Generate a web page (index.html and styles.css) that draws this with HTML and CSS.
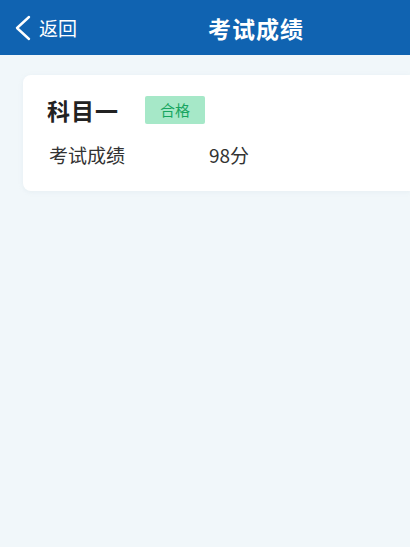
FILE: index.html
```html
<!DOCTYPE html>
<html lang="zh-CN">
<head>
    <meta charset="UTF-8">
    <title>考试成绩</title>
    <link rel="stylesheet" href="styles.css">
</head>
<body>
    <div id="header">
        <div class="back">
            <svg class="arrow" width="18" height="26" viewBox="0 0 18 26">
                <path d="M15 2 L3 13 L15 24" fill="none" stroke="#fff" stroke-width="2.4" stroke-linecap="round" stroke-linejoin="round"/>
            </svg>
            <span>返回</span>
        </div>
        <div class="title">考试成绩</div>
    </div>
    <div id="main">
        <div class="card">
            <div class="row-top">
                <span class="name">科目一</span>
                <span class="tag">合格</span>
            </div>
            <div class="row-score">
                <span class="label">考试成绩</span>
                <span class="value">98分</span>
            </div>
        </div>
    </div>
</body>
</html>
```

FILE: styles.css
```css
body, div, span{
    margin:0;
    padding:0;
}
body{
    font-family:"Noto Sans CJK SC", "Noto Sans", sans-serif;
    background:#f1f7fa;
    height:547px;
    overflow:hidden;
}
#header{
    display:flex;
    align-items:center;
    height:55px;
    background:#1063b1;
    color:#fff;
}
#header .back{
    display:flex;
    align-items:center;
    gap:7px;
    padding-left:14px;
    width:194px;
    font-size:19px;
}
#header .arrow{
    display:block;
}
#header .title{
    font-size:23px;
    font-weight:bold;
    letter-spacing:1px;
}
#main{
    padding:20px 0 0 23px;
}
.card{
    background:#fff;
    border-radius:8px 0 0 8px;
    height:116px;
    padding:18px 0 0 24px;
    box-sizing:border-box;
    box-shadow:0 1px 4px rgba(200, 215, 225, .25);
}
.row-top{
    display:flex;
    align-items:center;
    gap:26px;
}
.name{
    font-size:23px;
    font-weight:bold;
    color:#222;
    letter-spacing:1px;
}
.tag{
    background:#a6e8c8;
    color:#17a560;
    font-size:15px;
    width:60px;
    height:28px;
    line-height:28px;
    text-align:center;
    border-radius:2px;
}
.row-score{
    display:flex;
    margin-top:14px;
    font-size:19px;
    color:#333;
}
.label{
    width:160px;
    padding-left:2px;
}
```
